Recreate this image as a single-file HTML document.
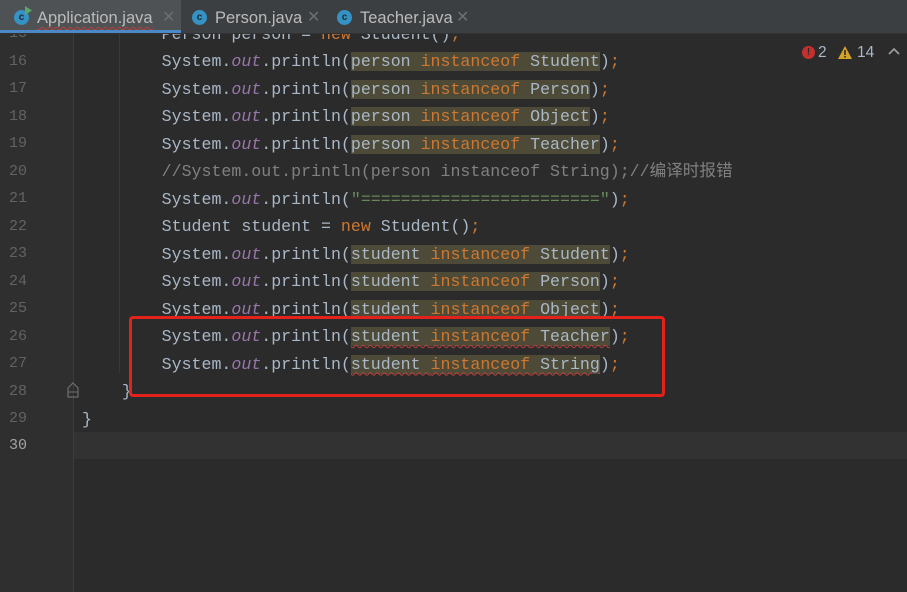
<!DOCTYPE html>
<html><head><meta charset="utf-8"><style>
body{margin:0;width:907px;height:592px;background:#2b2b2b;overflow:hidden;position:relative;font-family:"Liberation Mono","Noto Sans CJK SC",monospace}
.gut{position:absolute;left:0;top:0;width:73px;height:592px;background:#2f2f2f;border-right:1px solid #3c3c3c}
.guide{position:absolute;left:119px;top:33px;width:1px;height:340px;background:#393939}
.ln{position:absolute;left:0;width:27px;text-align:right;color:#606366;font-size:15px;line-height:27px}
.cl{position:absolute;left:82px;white-space:pre;font-size:16.6px;line-height:27px;color:#a9b7c6}
.k{color:#cc7832}.o{color:#9876aa;font-style:italic}.s{color:#6a8759}.c{color:#808080}
.h{background:#4d4b38}
.u{text-decoration:underline wavy #bc3f3c;text-decoration-thickness:1px;text-underline-offset:3px}
.tabs{position:absolute;left:0;top:0;width:907px;height:33px;background:#3c3f41;border-bottom:1px solid #323232;font-family:"Liberation Sans",sans-serif;font-size:16.5px;color:#bbbbbb}
.tab{position:absolute;top:0;height:33px;line-height:36px}
.ic{position:absolute;top:10px;width:15px;height:15px;border-radius:50%;background:#3592c4;color:#1e2a33;font-size:10px;font-weight:bold;line-height:15px;text-align:center}
.x{position:absolute;top:0;color:#6e6e6e;font-size:16px}
</style></head><body>
<div class="gut"></div>
<div class="guide"></div>
<div style="position:absolute;left:74px;top:432px;width:833px;height:27px;background:#323232"></div>

<div class="ln" style="top:20px">15</div>
<div class="ln" style="top:47.5px">16</div>
<div class="ln" style="top:75px">17</div>
<div class="ln" style="top:102.5px">18</div>
<div class="ln" style="top:130px">19</div>
<div class="ln" style="top:157.5px">20</div>
<div class="ln" style="top:185px">21</div>
<div class="ln" style="top:212.5px">22</div>
<div class="ln" style="top:240px">23</div>
<div class="ln" style="top:267.5px">24</div>
<div class="ln" style="top:295px">25</div>
<div class="ln" style="top:322.5px">26</div>
<div class="ln" style="top:350px">27</div>
<div class="ln" style="top:377.5px">28</div>
<div class="ln" style="top:405px">29</div>
<div class="ln" style="top:432px;color:#a4a3a3">30</div>

<div class="cl" style="top:20.5px">        Person person = <span class="k">new</span> Student()<span class="k">;</span></div>
<div class="cl" style="top:48px">        System.<span class="o">out</span>.println(<span class="h">person <span class="k">instanceof</span> Student</span>)<span class="k">;</span></div>
<div class="cl" style="top:75.5px">        System.<span class="o">out</span>.println(<span class="h">person <span class="k">instanceof</span> Person</span>)<span class="k">;</span></div>
<div class="cl" style="top:103px">        System.<span class="o">out</span>.println(<span class="h">person <span class="k">instanceof</span> Object</span>)<span class="k">;</span></div>
<div class="cl" style="top:130.5px">        System.<span class="o">out</span>.println(<span class="h">person <span class="k">instanceof</span> Teacher</span>)<span class="k">;</span></div>
<div class="cl c" style="top:158px">        //System.out.println(person instanceof String);//编译时报错</div>
<div class="cl" style="top:185.5px">        System.<span class="o">out</span>.println(<span class="s">"========================"</span>)<span class="k">;</span></div>
<div class="cl" style="top:213px">        Student student = <span class="k">new</span> Student()<span class="k">;</span></div>
<div class="cl" style="top:240.5px">        System.<span class="o">out</span>.println(<span class="h">student <span class="k">instanceof</span> Student</span>)<span class="k">;</span></div>
<div class="cl" style="top:268px">        System.<span class="o">out</span>.println(<span class="h">student <span class="k">instanceof</span> Person</span>)<span class="k">;</span></div>
<div class="cl" style="top:295.5px">        System.<span class="o">out</span>.println(<span class="h">student <span class="k">instanceof</span> Object</span>)<span class="k">;</span></div>
<div class="cl" style="top:323px">        System.<span class="o">out</span>.println(<span class="h u">student <span class="k">instanceof</span> Teacher</span>)<span class="k">;</span></div>
<div class="cl" style="top:350.5px">        System.<span class="o">out</span>.println(<span class="h u">student <span class="k">instanceof</span> String</span>)<span class="k">;</span></div>
<div class="cl" style="top:378px">    }</div>
<div class="cl" style="top:405.5px">}</div>

<svg style="position:absolute;left:66px;top:381px" width="14" height="18"><path d="M2 7 L7 2 L12 7 V16 H2 Z" fill="none" stroke="#6e6e6e" stroke-width="1.2"/><line x1="2" y1="11" x2="12" y2="11" stroke="#6e6e6e"/></svg>

<div style="position:absolute;left:129px;top:316px;width:530px;height:75px;border:3px solid #e3231b;border-radius:4px"></div>

<div style="position:absolute;left:802px;top:46px;width:13px;height:13px;border-radius:50%;background:#c3302e;color:#2b2b2b;font:bold 10px/13px 'Liberation Sans',sans-serif;text-align:center">!</div>
<div style="position:absolute;left:818px;top:44px;color:#a9b7c6;font:15.5px 'Liberation Sans',sans-serif">2</div>
<svg style="position:absolute;left:837px;top:45px" width="16" height="15"><path d="M8 1 L15 14 H1 Z" fill="#d6a329"/><rect x="7.2" y="5" width="1.6" height="5" fill="#2b2b2b"/><rect x="7.2" y="11" width="1.6" height="1.6" fill="#2b2b2b"/></svg>
<div style="position:absolute;left:857px;top:44px;color:#a9b7c6;font:15.5px 'Liberation Sans',sans-serif">14</div>
<svg style="position:absolute;left:888px;top:48px" width="12" height="8"><path d="M1 6 L6 1 L11 6" fill="none" stroke="#a0a0a0" stroke-width="1.6"/></svg>

<div class="tabs">
 <div class="tab" style="left:0;width:181px;background:#4e5254">
  <div class="ic" style="left:14px">c</div>
  <svg style="position:absolute;left:25px;top:6px" width="8" height="9"><path d="M0 0 L7 4.5 L0 9Z" fill="#59a869"/></svg>
  <span style="position:absolute;left:37px;text-decoration:underline wavy #bc3f3c;text-decoration-thickness:1px;text-underline-offset:3px">Application.java</span>
  <span class="x" style="left:162px">✕</span>
  <div style="position:absolute;left:0;bottom:0;width:181px;height:3px;background:#4a88c7"></div>
 </div>
 <div class="tab" style="left:190px;width:140px">
  <div class="ic" style="left:2px">c</div>
  <span style="position:absolute;left:25px">Person.java</span>
  <span class="x" style="left:117px">✕</span>
 </div>
 <div class="tab" style="left:335px;width:140px">
  <div class="ic" style="left:2px">c</div>
  <span style="position:absolute;left:25px">Teacher.java</span>
  <span class="x" style="left:121px">✕</span>
 </div>
</div>
</body></html>
